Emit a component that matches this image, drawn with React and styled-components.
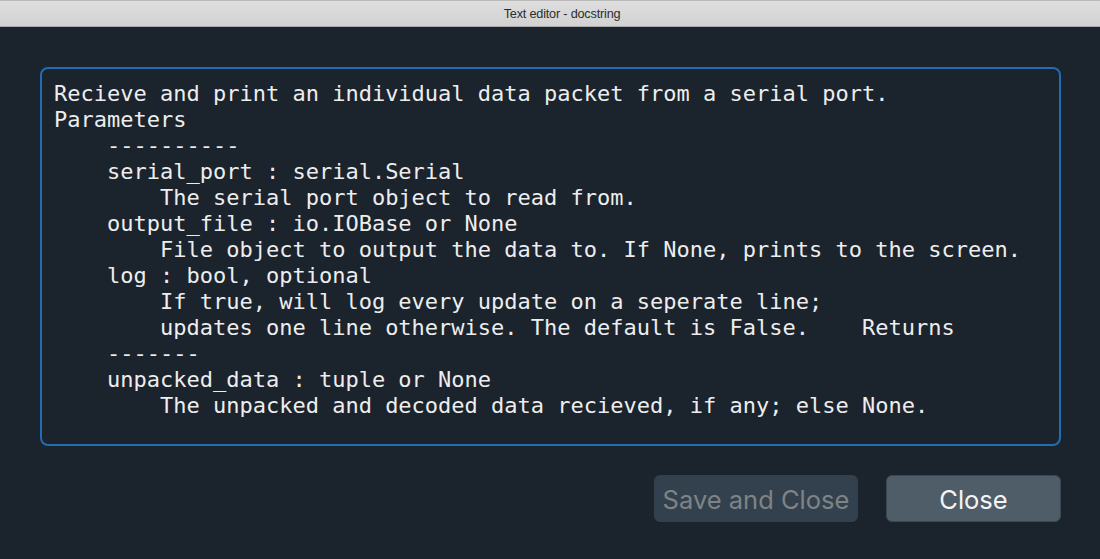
import React from "react";
import styled, { createGlobalStyle } from "styled-components";

const docstring = `Recieve and print an individual data packet from a serial port.
Parameters
    ----------
    serial_port : serial.Serial
        The serial port object to read from.
    output_file : io.IOBase or None
        File object to output the data to. If None, prints to the screen.
    log : bool, optional
        If true, will log every update on a seperate line;
        updates one line otherwise. The default is False.    Returns
    -------
    unpacked_data : tuple or None
        The unpacked and decoded data recieved, if any; else None.`;

const GlobalStyle = createGlobalStyle`
  html, body {
    margin: 0;
    padding: 0;
    background: #1b232d;
  }
`;

const Window = styled.div`
  width: 1100px;
  height: 559px;
  background: #1b232d;
`;

const TitleBar = styled.div`
  height: 27px;
  display: flex;
  align-items: center;
  justify-content: center;
  padding-left: 24px;
  background: linear-gradient(#dedede, #d2d2d2);
  border-top: 1px solid #b8b8b8;
  border-bottom: 1px solid #a9a9a9;
  font-family: "Liberation Sans", Arial, sans-serif;
  font-size: 12.7px;
  letter-spacing: -0.2px;
  color: #2c2c2c;
  box-sizing: border-box;
`;

const Body = styled.div`
  padding: 40px 39px 0 40px;
`;

const Editor = styled.div`
  padding: 12px 12px 25px;
  border: 2px solid #1f6db3;
  border-radius: 8px;
  color: #ededed;
  font-family: "DejaVu Sans Mono", monospace;
  font-size: 22px;
  line-height: 26px;
`;

const Line = styled.div`
  white-space: pre;
`;

const Actions = styled.div`
  display: flex;
  justify-content: flex-end;
  gap: 28px;
  margin-top: 29px;
`;

const Button = styled.button`
  width: ${({ $width }) => $width};
  height: 47px;
  box-sizing: border-box;
  border-radius: 6px;
  font-family: "Inter", "Liberation Sans", sans-serif;
  font-size: 25.5px;
  padding: 2px 0 0;
  background: ${({ disabled }) => (disabled ? "#33414e" : "#4f5d69")};
  color: ${({ disabled }) => (disabled ? "#7f8386" : "#f4f4f4")};
  border: 1px solid ${({ disabled }) => (disabled ? "#33414e" : "#3b4753")};
  cursor: ${({ disabled }) => (disabled ? "default" : "pointer")};
`;

export default function App() {
  return (
    <>
      <GlobalStyle />
      <Window>
        <TitleBar>Text editor - docstring</TitleBar>
        <Body>
          <Editor>
            {docstring.split("\n").map((line, i) => (
              <Line key={i}>{line}</Line>
            ))}
          </Editor>
          <Actions>
            <Button $width="204px" disabled>
              Save and Close
            </Button>
            <Button $width="175px">Close</Button>
          </Actions>
        </Body>
      </Window>
    </>
  );
}
